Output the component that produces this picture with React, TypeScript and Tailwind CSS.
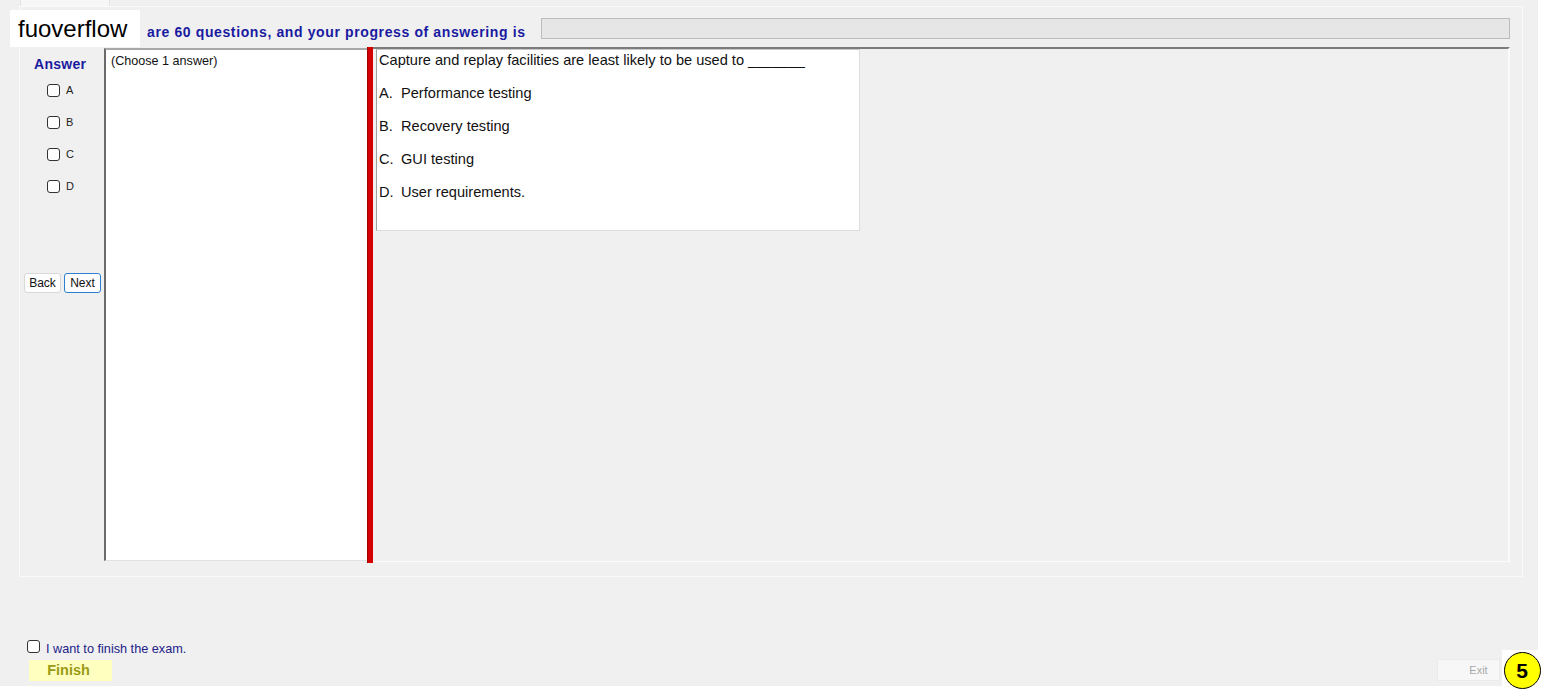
import React from "react";

const Box = ({ className = "" }: { className?: string }) => (
  <div className={`w-[13px] h-[13px] bg-white border border-[#333333] rounded-[3px] shrink-0 ${className}`} />
);

export default function App() {
  const opts = ["A", "B", "C", "D"];
  const answers = [
    ["A.", "Performance testing"],
    ["B.", "Recovery testing"],
    ["C.", "GUI testing"],
    ["D.", "User requirements."],
  ];
  return (
    <div className="relative w-[1542px] h-[690px] bg-white overflow-hidden font-['Liberation_Sans',Arial,sans-serif] text-black">
      <div className="w-[1538px] h-[686px] bg-[#f0f0f0] flex flex-col">
        {/* tab header strip */}
        <div className="h-[6px] pl-[20px] flex">
          <div className="w-[90px] h-[6px] bg-[#f7f7f7] border-x border-[#e2e2e2]" />
        </div>
        {/* tab page */}
        <div className="ml-[19px] w-[1504px] h-[571px] border border-[#fafafa] flex flex-col pl-[2px] pr-[12px]">
          {/* title row */}
          <div className="h-[40px] flex shrink-0">
            <div className="pt-[15px] pl-[125px] text-[14px] leading-[20px] font-bold tracking-[0.62px] text-[#1a1aa0] whitespace-nowrap">
              are 60 questions, and your progress of answering is
            </div>
            <div className="ml-auto pt-[11px]">
              <div className="w-[969px] h-[21px] bg-[#e6e6e6] border border-[#bcbcbc]" />
            </div>
          </div>
          {/* content row */}
          <div className="h-[516px] flex shrink-0">
            {/* answer column */}
            <div className="w-[82px] flex flex-col shrink-0">
              <div className="mt-[9px] pl-[12px] text-[14px] leading-[16px] font-bold tracking-[0.3px] text-[#1a1aa0]">Answer</div>
              <div className="mt-[2px] flex flex-col">
                {opts.map((o) => (
                  <div key={o} className="h-[32px] flex items-center pl-[25px]">
                    <Box />
                    <span className="ml-[6px] text-[11px] leading-[13px] text-[#222]">{o}</span>
                  </div>
                ))}
              </div>
              <div className="mt-[71px] pl-[2px] flex gap-[3px]">
                <div className="w-[37px] h-[20px] bg-[#fdfdfd] border border-[#d8d8d8] rounded-[3px] flex items-center justify-center text-[12px] text-[#111]">
                  Back
                </div>
                <div className="w-[37px] h-[20px] bg-[#fdfdfd] border border-[#2f7fd0] rounded-[3px] flex items-center justify-center text-[12px] text-[#111]">
                  Next
                </div>
              </div>
            </div>
            {/* choose panel */}
            <div className="w-[263px] mt-[1px] mb-[2px] bg-white border-l-2 border-t-2 border-l-[#6a6a6a] border-t-[#a8a8a8] border-b border-b-[#e3e3e3] pl-[5px] pt-[4px] shrink-0">
              <div className="text-[12.6px] leading-[15px] text-[#111]">(Choose 1 answer)</div>
            </div>
            {/* red bar */}
            <div className="w-[6px] h-[516px] bg-[#d40000] border-l border-[#a00000] shrink-0" />
            {/* question panel */}
            <div className="flex-1 border-t-2 border-t-[#7c7c7c] border-r-2 border-r-[#fbfbfb] border-b border-b-[#fbfbfb] mb-[1px] pl-[3px]">
              <div className="w-[484px] h-[182px] bg-white border border-[#dcdcdc] border-l-[#a0a0a0] border-t-[#c8c8c8] pl-[2px]">
                <div className="h-[33px] text-[14.6px] leading-[20px] text-[#111] whitespace-nowrap">
                  Capture and replay facilities are least likely to be used to _______
                </div>
                {answers.map(([l, t]) => (
                  <div key={l} className="h-[33px] flex text-[14.6px] leading-[20px] text-[#111] whitespace-nowrap">
                    <span className="w-[22px] shrink-0">{l}</span>
                    <span>{t}</span>
                  </div>
                ))}
              </div>
            </div>
          </div>
        </div>
        {/* bottom area */}
        <div className="flex-1 flex justify-between">
          <div className="flex flex-col pl-[27px]">
            <div className="mt-[63px] h-[13px] flex items-center">
              <Box />
              <span className="ml-[6px] mt-[4px] text-[12.7px] leading-[14px] text-[#22228a] whitespace-nowrap">
                I want to finish the exam.
              </span>
            </div>
            <div className="mt-[7px] ml-[2px] w-[83px] h-[21px] bg-[#ffffc0] flex items-center justify-center pr-[4px] text-[14.5px] font-bold text-[#9a9a14]">
              Finish
            </div>
          </div>
          <div className="flex flex-col mr-[38px]">
            <div className="mt-[82px] w-[63px] h-[22px] bg-[#f7f7f7] border border-[#ebebeb] flex items-center justify-center pl-[20px] text-[11px] text-[#a8a8a8]">
              Exit
            </div>
          </div>
        </div>
      </div>

      {/* watermark overlay */}
      <div className="absolute left-[10px] top-[10px] w-[130px] h-[37px] bg-white flex items-center pl-[8px]">
        <span className="text-[24px] leading-[28px] text-black">fuoverflow</span>
      </div>

      {/* badge */}
      <div className="absolute left-[1502px] top-[650px] w-[40px] h-[40px] bg-white flex items-center justify-center">
        <div className="w-[37px] h-[37px] rounded-full bg-[#ffff00] border-[1.5px] border-black flex items-center justify-center text-[21px] font-bold leading-none text-black">
          5
        </div>
      </div>
    </div>
  );
}
